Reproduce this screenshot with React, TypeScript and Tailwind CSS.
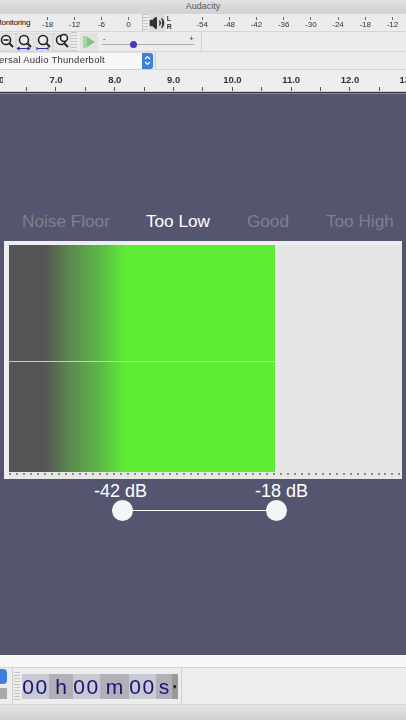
import { Volume2 } from "lucide-react";

const meterLeft = ["-18", "-12", "-6", "0"];
const meterRight = ["-54", "-48", "-42", "-36", "-30", "-24", "-18", "-12"];
const rulerMarks = ["7.0", "8.0", "9.0", "10.0", "11.0", "12.0", "13.0"];
const dots = Array.from({ length: 57 });

function Grip() {
  return <div className="h-full w-[6px] shrink-0 bg-[repeating-linear-gradient(180deg,#c4c4c4_0,#c4c4c4_1px,transparent_1px,transparent_3px)]" />;
}

function MeterTick({ label, width }: { label: string; width: string }) {
  return (
    <div className={`flex shrink-0 flex-col items-center ${width}`}>
      <div className="h-[3px] w-px bg-[#666]" />
      <span className="text-[8px] leading-[9px] text-[#333]">{label}</span>
    </div>
  );
}

function ZoomIcon({ kind }: { kind: "out" | "sel" | "fit" | "tog" }) {
  return (
    <div className="flex h-[18px] w-[18px] shrink-0 items-center justify-center bg-[#e6e6e6] shadow-[inset_0_0_0_1px_#d8d8d8]">
      <svg width="18" height="18" viewBox="0 0 18 18" fill="none" stroke="#222" strokeWidth="1.6">
        <circle cx="8" cy="7" r="4.5" fill="#efefef" />
        <path d="M11.5 10.5l3.5 3.5" strokeWidth="2" />
        {kind === "out" && <path d="M5.5 7h5" />}
        {kind === "sel" && <path d="M2 15.5h11M3.5 14l-2 1.5 2 1.5M11.5 14l2 1.5-2 1.5" stroke="#2b2bb8" strokeWidth="1.2" />}
        {kind === "fit" && <path d="M2 15.5h11M2 14v3M13 14v3" stroke="#2b2bb8" strokeWidth="1" />}
        {kind === "tog" && <circle cx="11" cy="5" r="3.5" fill="#efefef" />}
      </svg>
    </div>
  );
}

export default function App() {
  return (
    <div className="flex h-[720px] w-[406px] flex-col overflow-hidden bg-[#54566f] font-['Liberation_Sans',sans-serif]">
      {/* top toolbars */}
      <header className="shrink-0 bg-[#ececec] blur-[0.5px]">
        <div className="h-[13px] bg-gradient-to-b from-[#e2e2e2] to-[#d2d2d2] text-center text-[9px] leading-[13px] text-[#555]">
          Audacity
        </div>
        <div className="flex h-[19px] items-center border-y border-[#d6d6d6]">
          <div className="w-[31px] shrink-0 overflow-hidden">
            <span className="-ml-[5px] block w-[40px] text-[8px] tracking-[-0.2px] text-[#111]">Monitoring</span>
          </div>
          <div className="ml-[3px] flex">
            {meterLeft.map((m) => (
              <MeterTick key={m} label={m} width="w-[27px]" />
            ))}
          </div>
          <div className="h-full w-px bg-[#ccc]" />
          <div className="ml-[-1px] h-full"><Grip /></div>
          <div className="ml-px flex h-[17px] w-[18px] items-center justify-center bg-[#dcdcdc]">
            <Volume2 size={16} fill="#333" stroke="#333" />
          </div>
          <div className="ml-[2px] flex w-[8px] flex-col text-[7px] font-bold leading-[8px] text-[#333]">
            <span>L</span>
            <span>R</span>
          </div>
          <div className="ml-[15px] flex">
            {meterRight.map((m) => (
              <MeterTick key={m} label={m} width="w-[27.2px]" />
            ))}
          </div>
        </div>
        <div className="flex h-[20px] items-center border-b border-[#d6d6d6]">
          <div className="-ml-[2px] flex w-[73px] shrink-0 items-center justify-between">
            <ZoomIcon kind="out" />
            <ZoomIcon kind="sel" />
            <ZoomIcon kind="fit" />
            <ZoomIcon kind="tog" />
          </div>
          <div className="h-full w-[6px]"><Grip /></div>
          <div className="ml-[3px] flex h-[18px] w-[18px] items-center justify-center bg-[#e2e2e2]">
            <svg width="14" height="14" viewBox="0 0 14 14">
              <path d="M1 1h4v12H1z" fill="#a5d6a5" />
              <path d="M5 2l8 5-8 5z" fill="#7cc47c" />
            </svg>
          </div>
          <div className="relative ml-[4px] h-[12px] w-[92px]">
            <span className="absolute -top-[3px] left-[1px] text-[8px] text-[#333]">-</span>
            <span className="absolute -top-[3px] right-0 text-[8px] text-[#333]">+</span>
            <div className="absolute left-0 right-0 top-[8px] h-px bg-[#aaa]" />
            <div className="absolute left-[28px] top-[5px] h-[7px] w-[7px] rounded-full bg-[#4636b8]" />
          </div>
          <div className="ml-[7px] h-full w-px bg-[#d0d0d0]" />
        </div>
        <div className="flex h-[18px] items-center border-b border-[#d6d6d6]">
          <div className="flex h-[16px] w-[153px] shrink-0 items-center justify-between rounded-r-[3px] bg-[#f7f7f7] shadow-[0_0_1px_#999]">
            <span className="-ml-[1px] text-[9.5px] tracking-[0.25px] text-[#333]">ersal Audio Thunderbolt</span>
            <div className="flex h-full w-[11px] items-center justify-center rounded-r-[3px] bg-[#3f7fdc]">
              <svg width="7" height="11" viewBox="0 0 7 11" fill="none" stroke="#fff" strokeWidth="1.2">
                <path d="M1 4l2.5-2.5L6 4M1 7l2.5 2.5L6 7" />
              </svg>
            </div>
          </div>
          <div className="ml-[2px] h-full w-px bg-[#d0d0d0]" />
        </div>
        <div className="flex h-[17px] items-start overflow-hidden bg-[#eeeeee]">
          <span className="w-[4px] shrink-0 pt-[3px] text-[9.5px] font-bold leading-[14px] text-[#333]">
            <span className="-ml-[1px] block w-[4px] overflow-hidden text-right">0</span>
          </span>
          <div className="flex pl-[22.6px]">
            {rulerMarks.map((r) => (
              <div key={r} className="flex w-[58.8px] shrink-0 justify-center pt-[3px]">
                <span className="text-[9.5px] font-bold leading-[14px] text-[#333]">{r}</span>
              </div>
            ))}
          </div>
        </div>
        <div className="h-[4px] bg-[#eeeeee] bg-[repeating-linear-gradient(90deg,transparent_0,transparent_26px,#555_26px,#555_27px,transparent_27px,transparent_29.4px)]" />
        <div className="h-[1px] bg-[#c9d6a0]" />
        <div className="h-[1px] bg-[#333]" />
        <div className="h-[1px] bg-[#8f9070]" />
      </header>

      {/* analysis area */}
      <main className="flex flex-1 flex-col">
        <div className="mt-[112px] flex h-[30px] items-center text-[17.2px] leading-[20px] text-[#7f8090]">
          <span className="ml-[22px]">Noise Floor</span>
          <span className="ml-[36px] text-white">Too Low</span>
          <span className="ml-[37px]">Good</span>
          <span className="ml-[37px]">Too High</span>
        </div>
        <section className="mx-[4px] mt-[5px] flex h-[238px] flex-col bg-[#e6e6e4] shadow-[inset_5px_4px_0_#eceef2] pl-[5px] pr-[1px] pt-[4px]">
          <div className="relative h-[227px] w-[266px] bg-[linear-gradient(90deg,#555_0,#555_13.5%,#5a8a4e_23%,#5cb845_34%,#5eec35_44%,#5eec35_100%)]">
            <div className="absolute inset-x-0 top-[116px] h-px bg-[#c8d0b8]" />
          </div>
          <div className="mt-[1px] flex h-[4px] justify-between">
            {dots.map((_, i) => (
              <span key={i} className="h-[2px] w-[2px] bg-[#8a8a8a]" />
            ))}
          </div>
        </section>
        <div className="relative mx-auto mt-[2px] h-[44px] w-[406px]">
          <span className="absolute left-[94px] top-0 text-[18px] leading-[20px] text-white">-42 dB</span>
          <span className="absolute left-[255px] top-0 text-[18px] leading-[20px] text-white">-18 dB</span>
          <div className="absolute left-[122px] top-[29px] h-px w-[154px] bg-white" />
          <div className="absolute left-[112px] top-[19px] h-[21px] w-[21px] rounded-full bg-[#f4f5f7]" />
          <div className="absolute left-[266px] top-[19px] h-[21px] w-[21px] rounded-full bg-[#f4f5f7]" />
        </div>
      </main>

      {/* bottom toolbar */}
      <footer className="flex h-[65px] shrink-0 flex-col bg-[#f1f1f1] blur-[0.5px]">
        <div className="h-[12px] bg-[#f7f7f7]" />
        <div className="flex h-[38px] items-center border-y border-[#d4d4d4] bg-[#ededed]">
          <div className="flex h-full w-[7px] flex-col gap-[4px] pt-[1px]">
            <div className="h-[15px] rounded-r-[4px] bg-[#3f7fdc]" />
            <div className="h-[11px] bg-[#aaa]" />
          </div>
          <div className="ml-[5px] h-full w-px bg-[#d0d0d0]" />
          <div className="ml-[1px] h-[28px] w-[5px]"><Grip /></div>
          <div className="ml-[3px] flex h-[25px] items-center text-[21px] leading-[25px] text-[#14147c]">
            <span className="w-[27px] bg-[#c9c9d1] text-center tracking-[1.5px]">00</span>
            <span className="w-[24px] bg-[#b0b0b6] text-center">h</span>
            <span className="w-[27px] bg-[#c9c9d1] text-center tracking-[1.5px]">00</span>
            <span className="w-[29px] bg-[#b0b0b6] text-center">m</span>
            <span className="w-[27px] bg-[#c9c9d1] text-center tracking-[1.5px]">00</span>
            <span className="w-[16px] bg-[#b0b0b6] text-center">s</span>
            <span className="flex h-full w-[6px] items-center justify-center bg-[#999] text-[7px] text-black">▾</span>
          </div>
          <div className="ml-[3px] h-full w-px bg-[#d0d0d0]" />
        </div>
        <div className="flex-1 bg-gradient-to-b from-[#e4e4e4] to-[#cfcfcf]" />
      </footer>
    </div>
  );
}
